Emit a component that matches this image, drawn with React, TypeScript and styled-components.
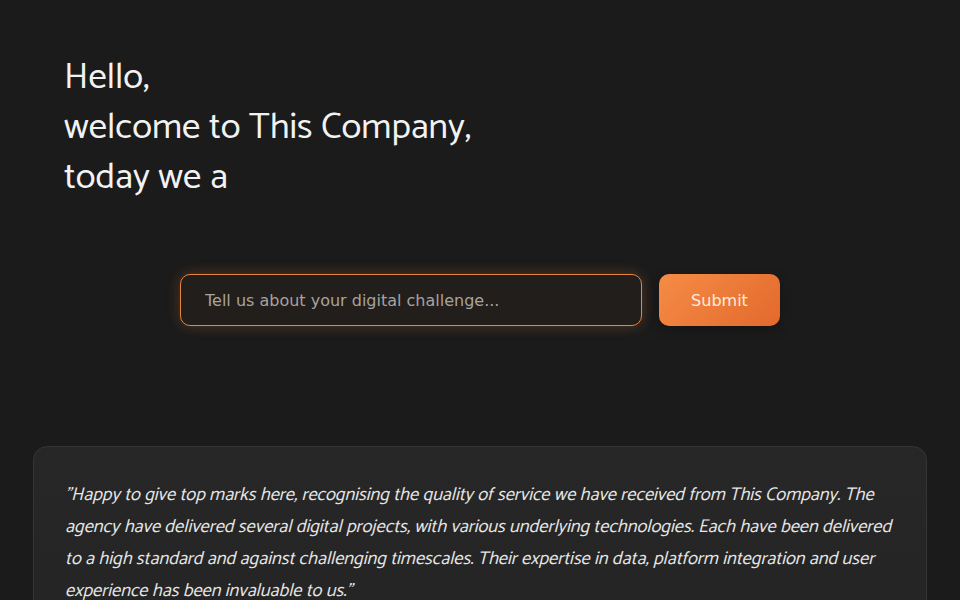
import styled, { createGlobalStyle } from "styled-components";

const Global = createGlobalStyle`
  html, body {
    margin: 0;
    background: #1b1b1b;
  }
  * { box-sizing: border-box; }
`;

const Page = styled.main`
  min-height: 600px;
  padding: 53px 32px 0;
  font-family: "Catamaran", "Hind", sans-serif;
  color: #f2f2f2;
`;

const Greeting = styled.h1`
  margin: 0;
  padding-left: 32px;
  font-size: 36.8px;
  font-weight: 400;
  line-height: 50px;
`;

const Form = styled.form`
  display: flex;
  gap: 17px;
  width: 600px;
  margin: 71px auto 0;
`;

const Input = styled.input`
  flex: 1;
  height: 52px;
  padding: 0 24px;
  border: 1px solid #e5853f;
  border-radius: 10px;
  background: #221e1b;
  box-shadow: 0 0 14px rgba(236, 128, 56, 0.28);
  color: #ddd;
  font-family: "DejaVu Sans", sans-serif;
  font-size: 16px;
  outline: none;

  &::placeholder {
    color: #a8a39f;
  }
`;

const Button = styled.button`
  width: 121px;
  height: 52px;
  border: none;
  border-radius: 10px;
  background: linear-gradient(135deg, #f68c46 0%, #e2692c 100%);
  box-shadow: 0 4px 12px rgba(0, 0, 0, 0.25);
  color: #fdebdd;
  font-family: "DejaVu Sans", sans-serif;
  font-size: 16px;
  cursor: pointer;
`;

const Card = styled.section`
  margin: 120px 1px 0;
  padding: 32px 31px 40px;
  border: 1px solid #353535;
  border-radius: 14px;
  background: linear-gradient(180deg, #272727 0%, #242424 100%);
`;

const Quote = styled.p`
  margin: 0;
  font-size: 18.4px;
  font-style: italic;
  line-height: 32px;
  color: #e6e6e6;
`;

export default function App() {
  return (
    <>
      <Global />
      <Page>
        <Greeting>
          Hello,
          <br />
          welcome to This Company,
          <br />
          today we a
        </Greeting>
        <Form onSubmit={(e) => e.preventDefault()}>
          <Input placeholder="Tell us about your digital challenge..." />
          <Button type="submit">Submit</Button>
        </Form>
        <Card>
          <Quote>
            "Happy to give top marks here, recognising the quality of service we have received from This Company. The
            agency have delivered several digital projects, with various underlying technologies. Each have been
            delivered to a high standard and against challenging timescales. Their expertise in data, platform
            integration and user experience has been invaluable to us."
          </Quote>
        </Card>
      </Page>
    </>
  );
}
